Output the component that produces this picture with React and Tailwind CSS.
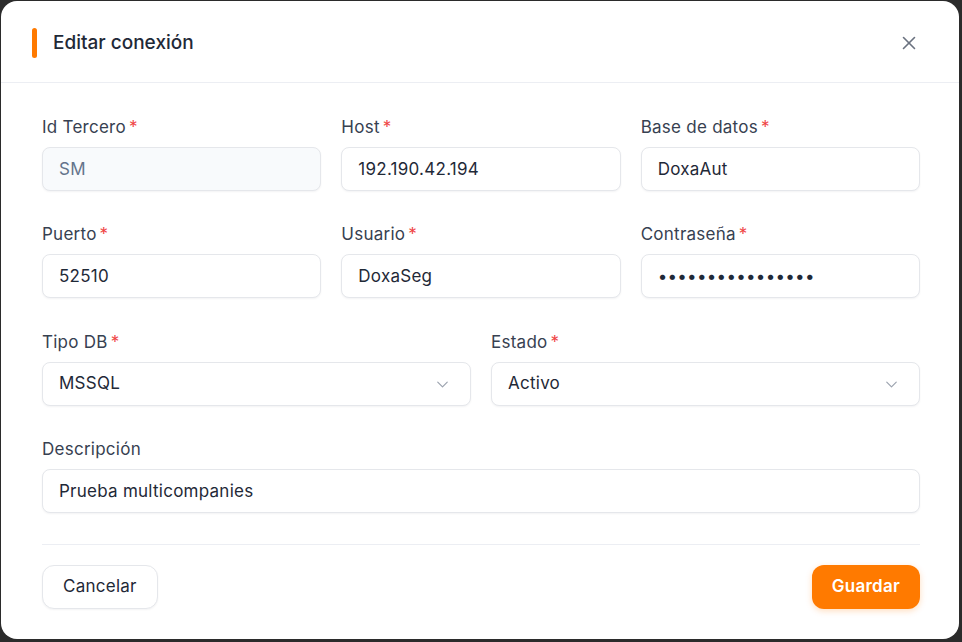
import { ChevronDown, X } from 'lucide-react';

const inputBase =
  'h-11 w-full rounded-lg border border-[#e5e7eb] px-4 text-[17px] tracking-[0.015em] text-[#1f2937] shadow-[0_1px_2px_rgba(15,23,42,0.05)] outline-none';

function Label({ children, required }) {
  return (
    <label className="mb-2 flex items-center text-[17px] leading-6 tracking-[0.015em] text-[#374151]">
      {children}
      {required && <span className="ml-[3px] text-[#ef4444]">*</span>}
    </label>
  );
}

function TextField({ label, value, required, disabled, type = 'text' }) {
  return (
    <div>
      <Label required={required}>{label}</Label>
      <input
        type={type}
        readOnly
        defaultValue={value}
        disabled={disabled}
        className={`${inputBase} ${disabled ? 'bg-[#f8fafc] text-[#64748b]' : 'bg-white'}`}
      />
    </div>
  );
}

function SelectField({ label, value, required }) {
  return (
    <div>
      <Label required={required}>{label}</Label>
      <div className={`${inputBase} flex items-center justify-between bg-white pr-[18px]`}>
        <span>{value}</span>
        <ChevronDown size={19} strokeWidth={1.5} className="text-[#9ca3af]" />
      </div>
    </div>
  );
}

export default function App() {
  return (
    <div className="h-screen w-full bg-[#2b2b2b] pb-[3px] pl-px pr-[3px] pt-px font-['Inter',sans-serif]">
      <div className="flex h-full flex-col rounded-2xl bg-white">
        <div className="flex h-[82px] items-center justify-between border-b border-[#eceef3] pl-[31px] pr-[39px] pt-[3px]">
          <div className="flex items-center gap-4">
            <span className="h-[30px] w-[5px] rounded-full bg-[#ff7a00]" />
            <h2 className="text-[19px] font-medium text-[#1f2937]">Editar conexión</h2>
          </div>
          <button className="text-[#6b7280]">
            <X size={22} strokeWidth={1.75} />
          </button>
        </div>

        <div className="pl-[41px] pr-[39px] pt-8">
          <div className="grid grid-cols-3 gap-x-5 gap-y-[31px]">
            <TextField label="Id Tercero" value="SM" required disabled />
            <TextField label="Host" value="192.190.42.194" required />
            <TextField label="Base de datos" value="DoxaAut" required />
            <TextField label="Puerto" value="52510" required />
            <TextField label="Usuario" value="DoxaSeg" required />
            <TextField label="Contraseña" value="DoxaSeg12345678!" type="password" required />
          </div>
          <div className="mt-8 grid grid-cols-2 gap-5">
            <SelectField label="Tipo DB" value="MSSQL" required />
            <SelectField label="Estado" value="Activo" required />
          </div>
          <div className="mt-[31px]">
            <TextField label="Descripción" value="Prueba multicompanies" />
          </div>
          <div className="mt-[31px] border-t border-[#eceef3]" />
          <div className="flex items-center justify-between pt-5">
            <button className="h-11 rounded-xl border border-[#e5e7eb] bg-white px-5 text-[17px] tracking-[0.015em] text-[#1f2937] shadow-[0_1px_2px_rgba(15,23,42,0.05)]">
              Cancelar
            </button>
            <button className="h-11 rounded-xl bg-[#ff7a00] px-5 text-[17px] font-semibold tracking-[0.015em] text-white shadow-[0_2px_6px_rgba(255,122,0,0.25)]">
              Guardar
            </button>
          </div>
        </div>
      </div>
    </div>
  );
}
